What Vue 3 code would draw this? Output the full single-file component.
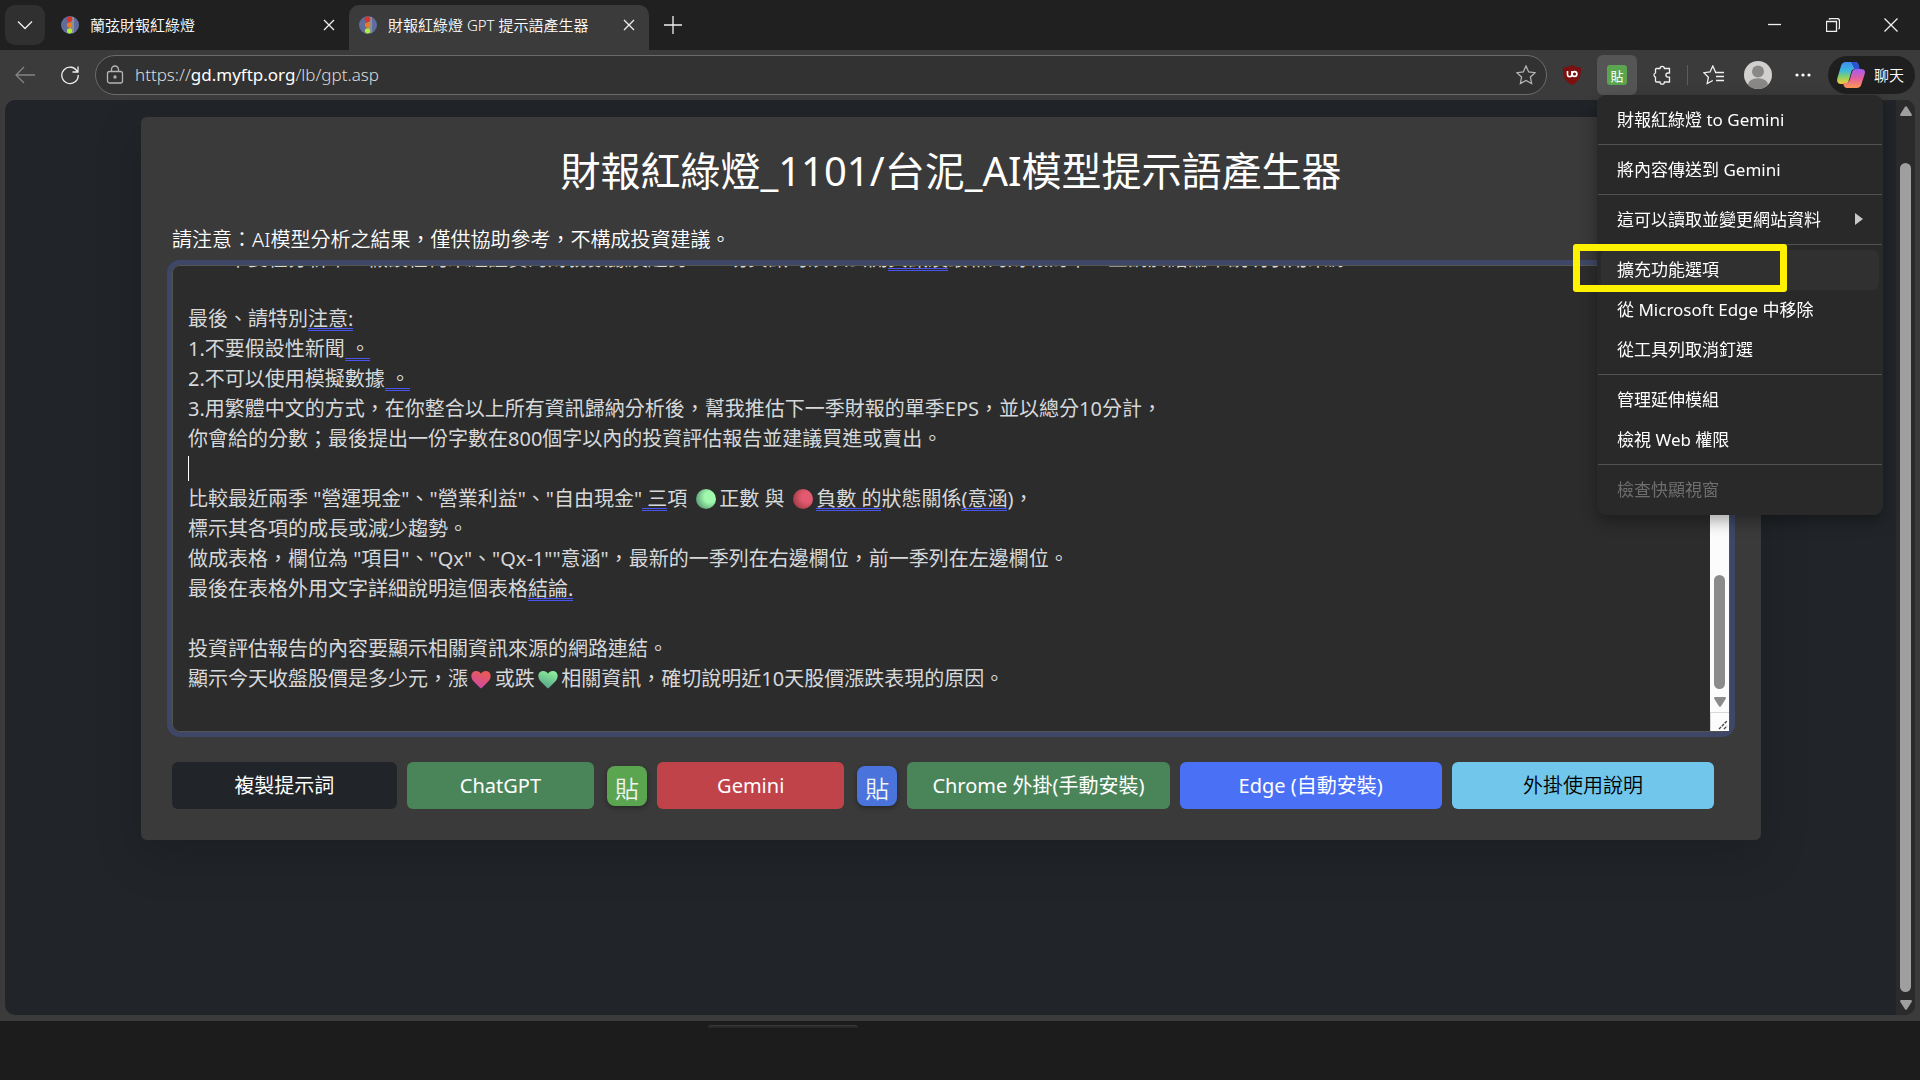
<template>
  <div class="browser">
    <header class="tab-strip">
      <button class="tab-menu" aria-label="分頁清單">
        <svg width="16" height="10" viewBox="0 0 16 10"><path d="M1 1.5l7 7 7-7" /></svg>
      </button>
      <div v-for="tab in tabs" :key="tab.title" class="tab" :class="{ active: tab.active }">
        <svg class="favicon" width="18" height="18" viewBox="0 0 18 18">
          <circle cx="9" cy="9" r="9" fill="#5f6c9c" />
          <path d="M9 1h4v16H9z" fill="#8b8f96" />
          <circle cx="8.500" cy="3.200" r="2.800" fill="#d8352c" />
          <circle cx="8.500" cy="9" r="2.600" fill="#ee7a1d" />
          <circle cx="8.500" cy="14.800" r="2.600" fill="#b4ee33" />
        </svg>
        <span class="tab-title">{{ tab.title }}</span>
        <button class="tab-close" aria-label="關閉分頁">
          <svg width="12" height="12" viewBox="0 0 12 12"><path d="M1 1l10 10M11 1L1 11" /></svg>
        </button>
      </div>
      <button class="tab-add" aria-label="新分頁">
        <svg width="18" height="18" viewBox="0 0 18 18"><path d="M9 0v18M0 9h18" /></svg>
      </button>
      <div class="window-controls">
        <button aria-label="最小化"><svg width="14" height="14" viewBox="0 0 14 14"><path d="M0 6.5h13" /></svg></button>
        <button aria-label="還原">
          <svg width="14" height="14" viewBox="0 0 14 14"><path d="M.5 3.5h10v10H.5zM3 1.5q.5-1 1.500-1H11q2.500 0 2.500 2.500v6.500q0 1-1 1.500" /></svg>
        </button>
        <button aria-label="關閉"><svg width="14" height="14" viewBox="0 0 14 14"><path d="M.5.5l13 13M13.500.5l-13 13" /></svg></button>
      </div>
    </header>

    <div class="toolbar">
      <button class="tool dim" aria-label="上一頁">
        <svg width="20" height="18" viewBox="0 0 20 18"><path d="M20 9H1M9 1L1 9l8 8" /></svg>
      </button>
      <button class="tool" aria-label="重新整理">
        <svg width="20" height="20" viewBox="0 0 20 20"><path d="M17.500 7A8.200 8.200 0 1 0 18.200 10M18 1.500V7h-5.500" /></svg>
      </button>
      <div class="address">
        <svg class="lock" width="18" height="20" viewBox="0 0 18 20">
          <rect x="1.500" y="6.500" width="15" height="11.500" rx="2" /><path d="M5.500 6.500V4.500a3.500 3.500 0 0 1 7 0v2" />
          <circle cx="9" cy="12" r="1" />
        </svg>
        <a class="url" href="https://gd.myftp.org/lb/gpt.asp">https://<b>gd.myftp.org</b>/lb/gpt.asp</a>
        <button class="star" aria-label="加入我的最愛">
          <svg width="20" height="20" viewBox="0 0 20 20"><path d="M10 1l2.700 5.900 6.400.8-4.700 4.400 1.200 6.400L10 15.400l-5.600 3.100 1.200-6.400L.9 7.700l6.400-.8z" /></svg>
        </button>
      </div>
      <button class="tool" aria-label="uBlock Origin">
        <svg width="18" height="20" viewBox="0 0 18 20">
          <path d="M9 0q4 2.500 9 2.500C18 11 17 16 9 20 1 16 0 11 0 2.500 5 2.500 9 0 9 0z" fill="#7c0f0f" stroke="none" />
          <path d="M4.500 6v3.500a2.200 2.200 0 0 0 4.400 0V6" stroke="#fff" stroke-width="1.600" /><circle cx="11.500" cy="9" r="2.400" stroke="#fff" stroke-width="1.600" />
        </svg>
      </button>
      <button class="tool pressed" aria-label="財報紅綠燈"><span class="paste-mini">貼</span></button>
      <button class="tool" aria-label="擴充功能">
        <svg width="20" height="20" viewBox="0 0 20 20"><path d="M4.500 3.500H8a2.200 2.200 0 0 1 4.400 0H17.500V8h-1.500a2 2 0 0 0 0 4.200h1.500v4.800H12.400a2.200 2.200 0 0 1-4.400 0H4.500q-1 0-1-1v-3.800a2.200 2.200 0 0 1 0-4.200V4.500q0-1 1-1z" /></svg>
      </button>
      <span class="divider"></span>
      <button class="tool" aria-label="我的最愛">
        <svg width="21" height="20" viewBox="0 0 21 20"><path d="M12.500 7L9.800 1 7 7 .8 7.700l4.600 4.500-1.200 6.300 5.600-3M12 7.500h9M13 11.500h8M13 15.500h8" /></svg>
      </button>
      <button class="tool" aria-label="個人資料">
        <svg width="28" height="28" viewBox="0 0 28 28" class="solid">
          <circle cx="14" cy="14" r="14" fill="#d2d0ce" /><circle cx="14" cy="10.500" r="6" fill="#8a8886" />
          <path d="M4 23.700a10 6.500 0 0 1 20 0A14 14 0 0 1 4 23.700z" fill="#8a8886" />
        </svg>
      </button>
      <button class="tool" aria-label="設定及其他">
        <svg width="16" height="4" viewBox="0 0 16 4" class="solid">
          <g fill="#fff"><circle cx="2" cy="2" r="1.600" /><circle cx="8" cy="2" r="1.600" /><circle cx="14" cy="2" r="1.600" /></g>
        </svg>
      </button>
      <button class="copilot">
        <svg width="28" height="26" viewBox="0 0 28 26" class="solid">
          <defs>
            <linearGradient id="cool" x1="0" y1="0" x2="0" y2="1">
              <stop offset="0" stop-color="#3f8df5" /><stop offset=".4" stop-color="#3cb9d8" /><stop offset=".7" stop-color="#8fd063" /><stop offset="1" stop-color="#ffc83a" />
            </linearGradient>
            <linearGradient id="warm" x1="0" y1="0" x2="0" y2="1">
              <stop offset="0" stop-color="#a35cf0" /><stop offset=".5" stop-color="#e5609f" /><stop offset="1" stop-color="#ff9a54" />
            </linearGradient>
          </defs>
          <path d="M14 0h4q2.500 0 3.500 3l1 4h-5q-2.500 0-3.300 3L12 18q-1 4-4 4H4q-5 0-3.600-6L4 4q1-4 5-4z" fill="url(#cool)" />
          <path d="M14 0h4q2.500 0 3.500 3l1 4h-5L15 2z" fill="#2b52cf" />
          <path d="M14 26h-4q-2.500 0-3.500-3l-.5-2h3q3 0 4-4l2-7q1-3 3.300-3H24q5 0 3.700 5L24.500 22q-1 4-5 4z" fill="url(#warm)" />
        </svg>
        <span>聊天</span>
      </button>
    </div>

    <main class="viewport">
      <div class="page">
        <section class="card">
          <h1>財報紅綠燈_1101/台泥_AI模型提示語產生器</h1>
          <label for="prompt">請注意：AI模型分析之結果，僅供協助參考，不構成投資建議。</label>
          <div class="editor">
            <textarea id="prompt" ref="promptBox" v-model="prompt" spellcheck="false" wrap="off"></textarea>
            <div class="overlay">
              <div class="overlay-lines" :style="{ height: lines.length * 30 + 'px' }">
                <i v-for="(m, i) in marks" :key="i" class="mark" :style="{ left: m.left + 'px', top: m.top + 'px', width: m.width + 'px' }"></i>
                <svg v-for="(s, i) in symbols" :key="'s' + i" class="symbol" width="20" height="20" viewBox="0 0 20 20" :style="{ left: s.left + 'px', top: s.top + 'px' }">
                  <defs>
                    <radialGradient :id="'ball' + i" cx=".7" cy=".4" r=".8">
                      <stop offset="0" :stop-color="s.from" /><stop offset=".35" :stop-color="s.from" /><stop offset="1" :stop-color="s.to" />
                    </radialGradient>
                    <linearGradient :id="'heart' + i" x1=".7" y1="0" x2=".3" y2="1">
                      <stop offset="0" :stop-color="s.from" /><stop offset="1" :stop-color="s.to" />
                    </linearGradient>
                  </defs>
                  <circle v-if="s.shape === 'ball'" cx="10" cy="10" r="10" :fill="`url(#ball${i})`" />
                  <path v-else d="M10 19.500Q8.500 18.500 2.800 12.500C-1.500 8 .2 2 5.200 2c2.200 0 3.800 1 4.800 2.800C11 3 12.600 2 14.800 2c5 0 6.700 6 2.400 10.500Q11.500 18.500 10 19.500z" :fill="`url(#heart${i})`" />
                </svg>
                <i class="caret" :style="{ top: 7 * 30 + 2 + 'px' }"></i>
              </div>
            </div>
            <div class="editor-scroll">
              <span class="editor-thumb"></span>
              <svg width="12" height="10" viewBox="0 0 12 10"><path d="M1 0h10q1.500.5.7 1.800L7 9.200q-1 1.200-2 0L.3 1.800Q-.5.5 1 0z" fill="#8b8b8b" /></svg>
              <span class="grip"><svg width="10" height="10" viewBox="0 0 10 10"><path d="M1 9l8-8M6 9l3-3" stroke="#444" stroke-width="1.400" stroke-dasharray="3 1" fill="none" /></svg></span>
            </div>
          </div>
          <div class="actions">
            <button class="btn dark">複製提示詞</button>
            <button class="btn green">ChatGPT</button>
            <span class="paste lime">貼</span>
            <button class="btn red">Gemini</button>
            <span class="paste blue">貼</span>
            <button class="btn green">Chrome 外掛(手動安裝)</button>
            <button class="btn royal">Edge (自動安裝)</button>
            <button class="btn sky">外掛使用說明</button>
          </div>
        </section>
      </div>
      <div class="page-scroll">
        <svg width="12" height="10" viewBox="0 0 12 10"><path d="M1 10h10q1.500-.5.7-1.800L7 .8q-1-1.200-2 0L.3 8.200Q-.5 9.500 1 10z" fill="#9f9f9f" /></svg>
        <span class="page-thumb"></span>
        <svg width="12" height="10" viewBox="0 0 12 10"><path d="M1 0h10q1.500.5.7 1.800L7 9.200q-1 1.200-2 0L.3 1.800Q-.5.5 1 0z" fill="#9f9f9f" /></svg>
      </div>
    </main>

    <footer class="taskbar"><span class="preview"></span></footer>

    <nav class="menu">
      <template v-for="(group, g) in menu" :key="g">
        <hr v-if="g > 0" />
        <button v-for="item in group" :key="item.text" class="menu-item" :class="{ hover: item.hover }" :disabled="item.disabled">
          <span>{{ item.text }}</span>
          <svg v-if="item.sub" width="8" height="12" viewBox="0 0 8 12"><path d="M0 0l8 6-8 6z" fill="#c8c8c8" /></svg>
        </button>
      </template>
      <span class="highlight-box"></span>
    </nav>
  </div>
</template>

<script setup>
import { nextTick, onMounted, ref } from 'vue'

const tabs = [
  { title: '蘭弦財報紅綠燈', active: false },
  { title: '財報紅綠燈 GPT 提示語產生器', active: true }
]

const menu = [
  [{ text: '財報紅綠燈 to Gemini' }],
  [{ text: '將內容傳送到 Gemini' }],
  [{ text: '這可以讀取並變更網站資料', sub: true }],
  [{ text: '擴充功能選項', hover: true }, { text: '從 Microsoft Edge 中移除' }, { text: '從工具列取消釘選' }],
  [{ text: '管理延伸模組' }, { text: '檢視 Web 權限' }],
  [{ text: '檢查快顯視窗', disabled: true }]
]

// 圖示的佔位空白, 圖示本身畫在 overlay
const GAP = '\u3000\u2004'

const lines = [
  '　　不要在分析中，假設任何未經證實的財務數據及趨勢，一切資訊均須以公開資訊及最新的財報為準，並請於結論中說明引用來源。',
  '',
  '最後、請特別注意:',
  '1.不要假設性新聞 。',
  '2.不可以使用模擬數據 。',
  '3.用繁體中文的方式，在你整合以上所有資訊歸納分析後，幫我推估下一季財報的單季EPS，並以總分10分計，',
  '你會給的分數；最後提出一份字數在800個字以內的投資評估報告並建議買進或賣出。',
  '',
  `比較最近兩季 "營運現金"、"營業利益"、"自由現金" 三項 ${GAP}正數 與 ${GAP}負數 的狀態關係(意涵)，`,
  '標示其各項的成長或減少趨勢。',
  '做成表格，欄位為 "項目"、"Qx"、"Qx-1""意涵"，最新的一季列在右邊欄位，前一季列在左邊欄位。',
  '最後在表格外用文字詳細說明這個表格結論.',
  '',
  '投資評估報告的內容要顯示相關資訊來源的網路連結。',
  `顯示今天收盤股價是多少元，漲${GAP}或跌${GAP}相關資訊，確切說明近10天股價漲跌表現的原因。`,
  ''
]

// 文法提示的雙底線: [行, 文字]
const hints = [
  [0, '資訊及'],
  [2, '注意:'],
  [3, ' 。'],
  [4, ' 。'],
  [8, ' 三'],
  [8, '負數 的'],
  [8, '(意涵'],
  [11, '結論.']
]

const icons = [
  { row: 8, before: GAP + '正數', shape: 'ball', from: '#a0f8ac', to: '#4f8f70' },
  { row: 8, before: GAP + '負數', shape: 'ball', from: '#e25a70', to: '#983840' },
  { row: 14, before: GAP + '或跌', shape: 'heart', from: '#ec5a50', to: '#d04aa8' },
  { row: 14, before: GAP + '相關', shape: 'heart', from: '#8cf098', to: '#57a08c' }
]

const prompt = ref(lines.join('\n'))
const promptBox = ref(null)
const marks = ref([])
const symbols = ref([])

const measure = () => {
  const style = getComputedStyle(promptBox.value)
  const ctx = document.createElement('canvas').getContext('2d')
  ctx.font = `${style.fontWeight} ${style.fontSize} ${style.fontFamily}`
  const leftOf = (row, word) => ctx.measureText(lines[row].slice(0, lines[row].lastIndexOf(word))).width

  marks.value = hints.map(([row, word]) => ({
    left: leftOf(row, word),
    top: row * 30 + 24,
    width: ctx.measureText(word).width
  }))
  symbols.value = icons.map(icon => ({
    ...icon,
    left: leftOf(icon.row, icon.before) + 3,
    top: icon.row * 30 + 5
  }))
}

onMounted(async () => {
  await nextTick()
  measure()
  promptBox.value.scrollTop = promptBox.value.scrollHeight
})
</script>

<style>
body {
  background: #1c1c1c;
}
</style>

<style scoped>
* {
  box-sizing: border-box;
}

.browser {
  position: relative;
  display: flex;
  flex-direction: column;
  min-height: 100vh;
  background: #3b3b3b;
  color: #fff;
  font-family: "Noto Sans", "Noto Sans CJK TC", sans-serif;
  font-size: 15px;
}

button {
  display: flex;
  align-items: center;
  justify-content: center;
  padding: 0;
  border: none;
  background: none;
  color: inherit;
  font: inherit;
  cursor: pointer;
}

header svg,
.toolbar svg {
  fill: none;
  stroke: #f0f0f0;
  stroke-width: 1.3;
}

.tab-strip .favicon,
.toolbar svg.solid {
  stroke: none;
}

.tab-strip {
  display: flex;
  height: 50px;
  padding: 5px 0 0 5px;
  background: #202020;
}

.tab-menu {
  width: 40px;
  height: 40px;
  margin-right: 6px;
  border-radius: 10px;
  background: #303030;
}

.tab {
  display: flex;
  align-items: center;
  width: 298px;
  height: 40px;
  padding: 0 10px;
}

.tab.active {
  width: 300px;
  height: 45px;
  padding-bottom: 5px;
  border-radius: 10px 10px 0 0;
  background: #3b3b3b;
}

.favicon {
  margin-right: 11px;
}

.tab-title {
  flex: 1;
  padding-bottom: 1px;
  font-weight: 350;
  white-space: nowrap;
}

.tab-close {
  width: 20px;
  height: 20px;
}

.tab-add {
  width: 48px;
  height: 40px;
}

.window-controls {
  display: flex;
  margin-left: auto;
}

.window-controls button {
  width: 58px;
  height: 40px;
}

.toolbar {
  display: flex;
  align-items: center;
  gap: 5px;
  height: 50px;
  padding: 0 5px;
}

.tool {
  flex: none;
  width: 40px;
  height: 40px;
  border-radius: 6px;
}

.tool.dim {
  opacity: 0.4;
}

.tool.pressed {
  background: #555;
}

.paste-mini {
  width: 20px;
  height: 20px;
  border-radius: 3px;
  background: #5ba550;
  font-size: 13px;
  line-height: 22px;
}

.address {
  display: flex;
  flex: 1;
  align-items: center;
  height: 40px;
  padding: 0 10px;
  border: 1px solid #6b6b6b;
  border-radius: 20px;
  background: #323232;
}

.url {
  flex: 1;
  margin-left: 11px;
  padding-bottom: 2px;
  color: #dcdcdc;
  font-size: 17px;
  font-weight: 350;
  text-decoration: none;
}

.url b {
  color: #fff;
  font-weight: 400;
}

.star {
  width: 20px;
  height: 20px;
}

.address svg {
  stroke: #b4b4b4;
}

.divider {
  width: 1px;
  height: 20px;
  background: #5c5c5c;
}

.copilot {
  gap: 9px;
  width: 87px;
  height: 38px;
  padding-right: 2px;
  border-radius: 19px;
  background: #1f1f1f;
  font-weight: 350;
}

.copilot span {
  padding-bottom: 2px;
}

.viewport {
  display: flex;
  flex: 1;
  margin: 0 5px 6px;
  overflow: hidden;
  border-radius: 10px;
  background: #212529;
}

.page {
  flex: 1;
  padding: 17px 135px 0 136px;
}

.card {
  padding: 30px 31px 31px;
  border-radius: 6px;
  background: #3a3a3a;
  box-shadow: 0 16px 48px rgba(0, 0, 0, 0.18);
  font-size: 20px;
  line-height: 30px;
}

h1 {
  margin: 0 0 30px;
  font-size: 40px;
  font-weight: 400;
  line-height: 48px;
  text-align: center;
}

label {
  display: block;
  margin-bottom: 10px;
  font-weight: 350;
}

.editor {
  position: relative;
  height: 467px;
  border-radius: 8px;
  box-shadow: 0 0 0 5px #3e4767;
}

textarea {
  display: block;
  width: 100%;
  height: 100%;
  padding: 9px 15px 7px;
  border: 1px solid #55554f;
  border-radius: 8px;
  outline: none;
  background: #2c2c2c;
  color: #d6d8da;
  font: inherit;
  line-height: 30px;
  resize: none;
  scrollbar-width: none;
}

/* 底線與游標疊在文字上, 對齊捲到底部的內容 */
.overlay {
  position: absolute;
  inset: 1px;
  display: flex;
  align-items: flex-end;
  padding: 0 15px 7px;
  overflow: hidden;
  pointer-events: none;
}

.overlay-lines {
  position: relative;
  flex: 1;
}

.mark {
  position: absolute;
  height: 3px;
  border: solid #4a55ee;
  border-width: 1px 0;
}

.symbol {
  position: absolute;
}

.caret {
  position: absolute;
  left: 0;
  width: 1px;
  height: 25px;
  background: #fff;
}

.editor-scroll {
  position: absolute;
  top: 1px;
  right: 1px;
  bottom: 1px;
  display: flex;
  flex-direction: column;
  align-items: center;
  justify-content: flex-end;
  width: 19px;
  background: #fcfcfc;
}

.editor-thumb {
  width: 11px;
  height: 114px;
  margin-bottom: 8px;
  border-radius: 6px;
  background: #8b8b8b;
}

.grip {
  display: flex;
  align-items: flex-end;
  justify-content: flex-end;
  width: 19px;
  height: 19px;
  margin-top: 5px;
  padding: 1px;
  border-top: 1px solid #d8d8d8;
  border-left: 1px solid #d8d8d8;
}

.actions {
  display: grid;
  grid-template-columns: 6fr 5fr 43px 5fr 43px 7fr 7fr 7fr;
  gap: 10px;
  align-items: center;
  margin: 30px 16px 0 0;
}

.btn {
  height: 47px;
  border-radius: 6px;
  white-space: nowrap;
}

.dark {
  background: #212529;
}

.green {
  background: #4a855a;
}

.red {
  background: #c04349;
}

.royal {
  background: #4a70f5;
}

.sky {
  background: #71c6ec;
  color: #000;
  font-weight: 350;
}

.paste {
  justify-self: end;
  width: 40px;
  height: 40px;
  border-radius: 8px;
  box-shadow: 0 2px 5px rgba(0, 0, 0, 0.35);
  color: #f0f4f0;
  font-size: 24px;
  font-weight: 350;
  line-height: 46px;
  text-align: center;
}

.lime {
  background: #5ba550;
}

.blue {
  background: #4a73dc;
}

.page-scroll {
  display: flex;
  flex-direction: column;
  align-items: center;
  gap: 8px;
  width: 19px;
  padding: 6px 0 5px;
  background: #2b2b2b;
}

.page-thumb {
  flex: 1;
  width: 11px;
  margin-top: 39px;
  border-radius: 6px;
  background: #9f9f9f;
}

.taskbar {
  height: 59px;
  padding: 4px 0 0 708px;
  background: #1c1c1c;
}

.preview {
  display: block;
  width: 150px;
  height: 3px;
  border-top: 1px solid #3a3a3a;
  border-radius: 4px 4px 0 0;
  background: #282828;
}

.menu {
  position: absolute;
  top: 95px;
  right: 37px;
  width: 286px;
  padding: 5px 4px;
  border-radius: 9px;
  background: #292929;
  box-shadow: 0 6px 16px rgba(0, 0, 0, 0.35);
  font-size: 17px;
}

.menu hr {
  height: 1px;
  margin: 4px -3px 5px;
  border: none;
  background: #525252;
}

.menu-item {
  justify-content: space-between;
  width: 100%;
  height: 40px;
  padding: 0 16px 3px;
  border-radius: 6px;
}

.menu-item.hover {
  background: #303030;
}

.menu-item:disabled {
  color: #6e6e6e;
}

.highlight-box {
  position: absolute;
  top: 149px;
  left: -24px;
  width: 214px;
  height: 48px;
  border: 7px solid #fff200;
  border-radius: 3px;
}
</style>
